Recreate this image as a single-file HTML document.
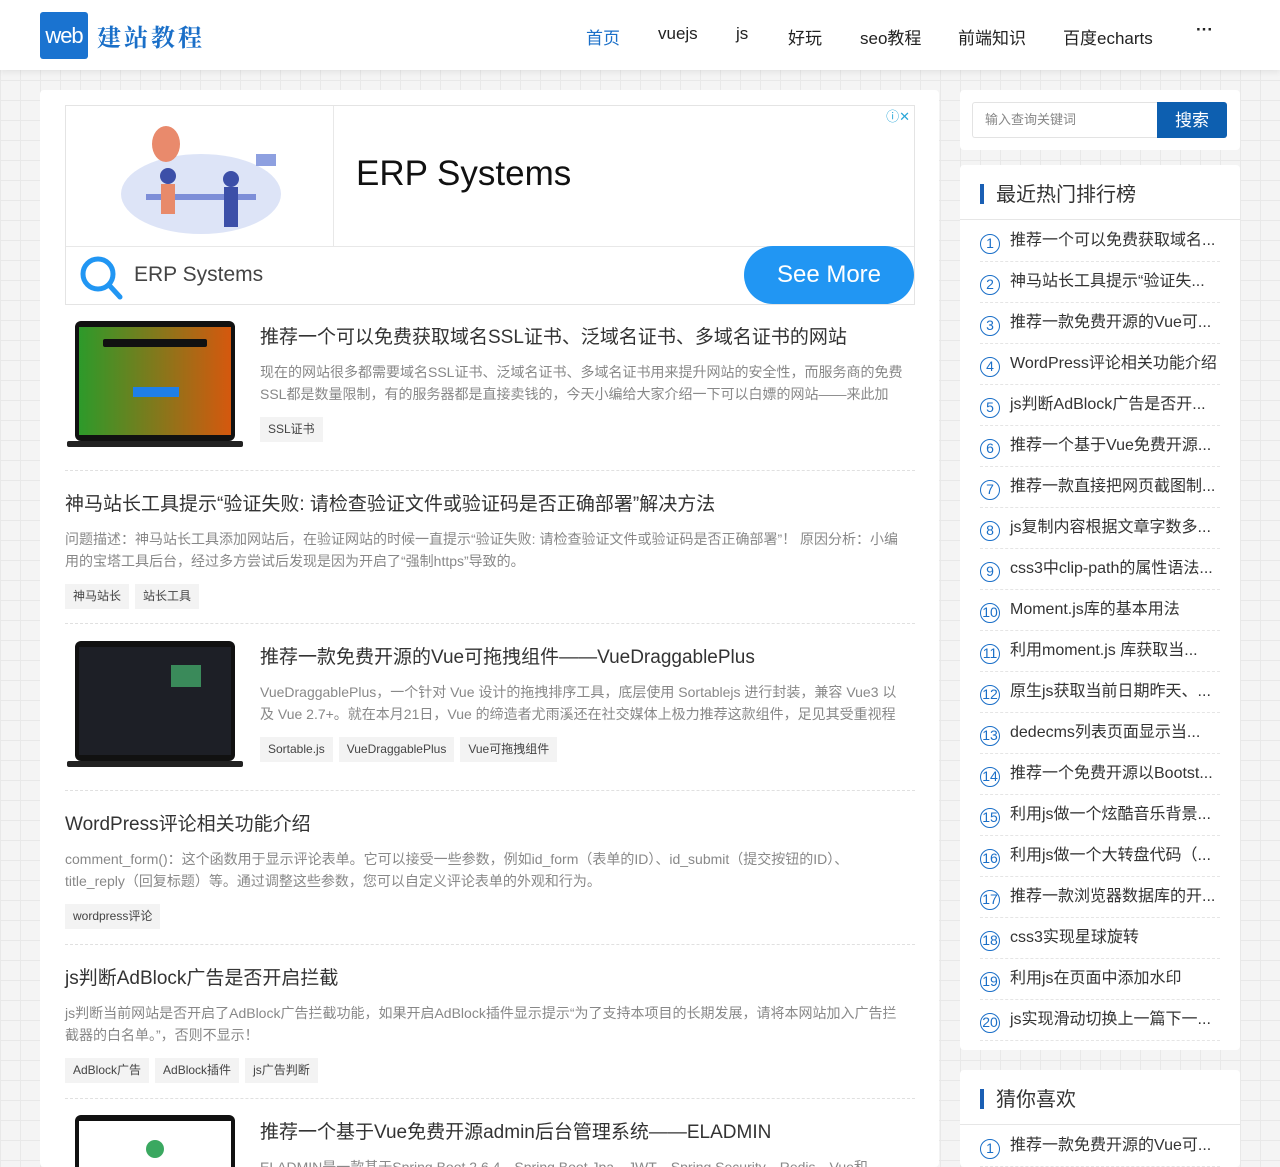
<!DOCTYPE html>
<html style="height:1167px;overflow:hidden"><head><meta charset="utf-8"><style>
*{margin:0;padding:0;box-sizing:border-box}
body{width:1280px;height:1167px;overflow:hidden;font-family:"Liberation Sans","Noto Sans CJK SC",sans-serif;background-color:#f4f4f4;background-image:linear-gradient(#e8e8e8 1px,transparent 1px),linear-gradient(90deg,#e8e8e8 1px,transparent 1px);background-size:20px 20px;position:relative;color:#333}
.hd{position:absolute;left:0;top:0;width:1280px;height:70px;background:#fff;box-shadow:0 2px 6px rgba(0,0,0,.08)}
.logo{position:absolute;left:40px;top:12px;width:48px;height:47px;background:#1a73d0;border-radius:3px;color:#fff;font-size:22px;line-height:47px;text-align:center;letter-spacing:-1px}
.lt{position:absolute;left:97px;top:18px;font-size:24px;color:#1a6fc8;font-weight:bold;letter-spacing:3px;font-family:"Noto Serif CJK SC",serif}
.nav{position:absolute;top:24px;font-size:17px;color:#222}
.main{position:absolute;left:40px;top:90px;width:899px;height:1077px;background:#fff;border-radius:4px;overflow:hidden}
.ad{position:absolute;left:25px;top:15px;width:850px;height:200px;border:1px solid #e4e4e4}
.post{position:absolute;left:25px;width:850px}
.pt{font-size:19px;color:#333;white-space:nowrap}
.pd{font-size:14px;color:#888;line-height:22px;margin-top:12px}
.tags{margin-top:12px}
.tag{display:inline-block;background:#f3f3f3;font-size:12px;color:#444;padding:0 8px;height:25px;line-height:25px;margin-right:6px}
.hr{position:absolute;left:25px;width:850px;border-top:1px dashed #e0e0e0}
.thumb{position:absolute;left:2px;width:176px;height:127px}
.side{position:absolute;left:960px;width:280px;background:#fff;border-radius:4px}
.rl{position:absolute;left:20px;width:240px;height:41px;border-bottom:1px dashed #e5e5e5;font-size:16px;color:#333;white-space:nowrap;overflow:hidden;line-height:40px}
.num{display:inline-block;width:20px;height:20px;border:1.5px solid #1a6fc8;border-radius:50%;color:#1a6fc8;font-size:14px;line-height:17px;text-align:center;margin-right:10px;vertical-align:-3px}
</style></head><body>
<div class="hd">
<div class="logo">web</div><div class="lt">建站教程</div>
<span class="nav" style="left:586px;color:#1a6fc8">首页</span>
<span class="nav" style="left:658px">vuejs</span>
<span class="nav" style="left:736px">js</span>
<span class="nav" style="left:788px">好玩</span>
<span class="nav" style="left:860px">seo教程</span>
<span class="nav" style="left:958px">前端知识</span>
<span class="nav" style="left:1063px">百度echarts</span>
<span class="nav" style="left:1196px;top:20px;font-weight:bold">···</span>
</div>

<div class="main">
<div class="ad">
<div style="position:absolute;left:267px;top:0;width:1px;height:140px;background:#e8e8e8"></div>
<div style="position:absolute;left:0;top:140px;width:848px;height:1px;background:#e8e8e8"></div>
<svg style="position:absolute;left:40px;top:18px" width="190" height="115"><ellipse cx="95" cy="70" rx="80" ry="40" fill="#dde4f7"/><ellipse cx="60" cy="20" rx="14" ry="18" fill="#e98a6c"/><rect x="40" y="70" width="110" height="6" fill="#7d8ed8"/><circle cx="62" cy="52" r="8" fill="#3c4fa8"/><circle cx="125" cy="55" r="8" fill="#3c4fa8"/><rect x="55" y="60" width="14" height="30" fill="#e88a6a"/><rect x="118" y="63" width="14" height="40" fill="#3c4fa8"/><rect x="150" y="30" width="20" height="12" fill="#8ea0e0"/></svg>
<div style="position:absolute;left:290px;top:48px;font-size:35px;color:#111">ERP Systems</div>
<svg style="position:absolute;left:12px;top:148px" width="46" height="46"><circle cx="20" cy="20" r="15" fill="none" stroke="#2196f3" stroke-width="5"/><line x1="31" y1="31" x2="42" y2="43" stroke="#2196f3" stroke-width="5" stroke-linecap="round"/></svg>
<div style="position:absolute;left:68px;top:157px;font-size:21px;color:#444">ERP Systems</div>
<div style="position:absolute;left:678px;top:140px;width:170px;height:58px;background:#2196f3;border-radius:29px;color:#fff;font-size:24px;line-height:58px;text-align:center">See More</div>
<div style="position:absolute;right:4px;top:0;font-size:13px;color:#2aa6d8">ⓘ✕</div>
</div>

<svg class="thumb" style="left:27px;top:231px" viewBox="0 0 176 127"><rect x="8" y="0" width="160" height="120" rx="6" fill="#111"/><defs><linearGradient id="g1" x1="0" x2="1"><stop offset="0" stop-color="#2d9a2a"/><stop offset="1" stop-color="#d5580e"/></linearGradient></defs><rect x="12" y="6" width="152" height="108" fill="url(#g1)"/><rect x="36" y="18" width="104" height="8" rx="2" fill="#111"/><rect x="66" y="66" width="46" height="10" fill="#1f7fe8"/><rect x="0" y="120" width="176" height="6" rx="2" fill="#222"/></svg>
<div class="post" style="top:232px;left:220px;width:650px"><div class="pt">推荐一个可以免费获取域名SSL证书、泛域名证书、多域名证书的网站</div><div class="pd">现在的网站很多都需要域名SSL证书、泛域名证书、多域名证书用来提升网站的安全性，而服务商的免费<br>SSL都是数量限制，有的服务器都是直接卖钱的，今天小编给大家介绍一下可以白嫖的网站——来此加</div><div class="tags"><span class="tag">SSL证书</span></div></div>
<div class="hr" style="top:380px"></div>

<div class="post" style="top:399px"><div class="pt">神马站长工具提示“验证失败: 请检查验证文件或验证码是否正确部署”解决方法</div><div class="pd">问题描述：神马站长工具添加网站后，在验证网站的时候一直提示“验证失败: 请检查验证文件或验证码是否正确部署”！ 原因分析：小编<br>用的宝塔工具后台，经过多方尝试后发现是因为开启了“强制https”导致的。</div><div class="tags"><span class="tag">神马站长</span><span class="tag">站长工具</span></div></div>
<div class="hr" style="top:533px"></div>

<svg class="thumb" style="left:27px;top:551px" viewBox="0 0 176 127"><rect x="8" y="0" width="160" height="120" rx="6" fill="#111"/><rect x="12" y="6" width="152" height="108" fill="#1d1f26"/><rect x="104" y="24" width="30" height="22" fill="#3a8a5a"/><rect x="0" y="120" width="176" height="6" rx="2" fill="#222"/></svg>
<div class="post" style="top:552px;left:220px;width:650px"><div class="pt">推荐一款免费开源的Vue可拖拽组件——VueDraggablePlus</div><div class="pd">VueDraggablePlus，一个针对 Vue 设计的拖拽排序工具，底层使用 Sortablejs 进行封装，兼容 Vue3 以<br>及 Vue 2.7+。就在本月21日，Vue 的缔造者尤雨溪还在社交媒体上极力推荐这款组件，足见其受重视程</div><div class="tags"><span class="tag">Sortable.js</span><span class="tag">VueDraggablePlus</span><span class="tag">Vue可拖拽组件</span></div></div>
<div class="hr" style="top:700px"></div>

<div class="post" style="top:719px"><div class="pt">WordPress评论相关功能介绍</div><div class="pd">comment_form()：这个函数用于显示评论表单。它可以接受一些参数，例如id_form（表单的ID）、id_submit（提交按钮的ID）、<br>title_reply（回复标题）等。通过调整这些参数，您可以自定义评论表单的外观和行为。</div><div class="tags"><span class="tag">wordpress评论</span></div></div>
<div class="hr" style="top:854px"></div>

<div class="post" style="top:873px"><div class="pt">js判断AdBlock广告是否开启拦截</div><div class="pd">js判断当前网站是否开启了AdBlock广告拦截功能，如果开启AdBlock插件显示提示“为了支持本项目的长期发展，请将本网站加入广告拦<br>截器的白名单。”，否则不显示！</div><div class="tags"><span class="tag">AdBlock广告</span><span class="tag">AdBlock插件</span><span class="tag">js广告判断</span></div></div>
<div class="hr" style="top:1008px"></div>

<svg class="thumb" style="left:27px;top:1025px" viewBox="0 0 176 127"><rect x="8" y="0" width="160" height="120" rx="6" fill="#111"/><rect x="12" y="6" width="152" height="108" fill="#fff"/><circle cx="88" cy="34" r="9" fill="#3aa860"/></svg>
<div class="post" style="top:1027px;left:220px;width:650px"><div class="pt">推荐一个基于Vue免费开源admin后台管理系统——ELADMIN</div><div class="pd">ELADMIN是一款基于Spring Boot 2.6.4、Spring Boot Jpa、JWT、Spring Security、Redis、Vue和</div></div>
</div>

<div class="side" style="top:90px;height:60px">
<div style="position:absolute;left:12px;top:12px;width:186px;height:36px;border:1px solid #e3e3e3;border-right:0;border-radius:3px 0 0 3px;font-size:13px;color:#888;line-height:34px;padding-left:12px">输入查询关键词</div>
<div style="position:absolute;left:197px;top:12px;width:70px;height:36px;background:#0d5fb0;border-radius:0 3px 3px 0;color:#fff;font-size:17px;line-height:38px;text-align:center">搜索</div>
</div>

<div class="side" style="top:165px;height:885px">
<div style="position:absolute;left:20px;top:19px;width:4px;height:20px;background:#1a5fb4"></div>
<div style="position:absolute;left:36px;top:13px;font-size:20px;color:#333">最近热门排行榜</div>
<div style="position:absolute;left:0;top:54px;width:280px;height:1px;background:#e6e6e6"></div>
<div class="rl" style="top:56px"><span class="num">1</span>推荐一个可以免费获取域名...</div>
<div class="rl" style="top:97px"><span class="num">2</span>神马站长工具提示“验证失...</div>
<div class="rl" style="top:138px"><span class="num">3</span>推荐一款免费开源的Vue可...</div>
<div class="rl" style="top:179px"><span class="num">4</span>WordPress评论相关功能介绍</div>
<div class="rl" style="top:220px"><span class="num">5</span>js判断AdBlock广告是否开...</div>
<div class="rl" style="top:261px"><span class="num">6</span>推荐一个基于Vue免费开源...</div>
<div class="rl" style="top:302px"><span class="num">7</span>推荐一款直接把网页截图制...</div>
<div class="rl" style="top:343px"><span class="num">8</span>js复制内容根据文章字数多...</div>
<div class="rl" style="top:384px"><span class="num">9</span>css3中clip-path的属性语法...</div>
<div class="rl" style="top:425px"><span class="num">10</span>Moment.js库的基本用法</div>
<div class="rl" style="top:466px"><span class="num">11</span>利用moment.js 库获取当...</div>
<div class="rl" style="top:507px"><span class="num">12</span>原生js获取当前日期昨天、...</div>
<div class="rl" style="top:548px"><span class="num">13</span>dedecms列表页面显示当...</div>
<div class="rl" style="top:589px"><span class="num">14</span>推荐一个免费开源以Bootst...</div>
<div class="rl" style="top:630px"><span class="num">15</span>利用js做一个炫酷音乐背景...</div>
<div class="rl" style="top:671px"><span class="num">16</span>利用js做一个大转盘代码（...</div>
<div class="rl" style="top:712px"><span class="num">17</span>推荐一款浏览器数据库的开...</div>
<div class="rl" style="top:753px"><span class="num">18</span>css3实现星球旋转</div>
<div class="rl" style="top:794px"><span class="num">19</span>利用js在页面中添加水印</div>
<div class="rl" style="top:835px"><span class="num">20</span>js实现滑动切换上一篇下一...</div>
</div>

<div class="side" style="top:1070px;height:97px">
<div style="position:absolute;left:20px;top:19px;width:4px;height:20px;background:#1a5fb4"></div>
<div style="position:absolute;left:36px;top:13px;font-size:20px;color:#333">猜你喜欢</div>
<div style="position:absolute;left:0;top:54px;width:280px;height:1px;background:#e6e6e6"></div>
<div class="rl" style="top:56px"><span class="num">1</span>推荐一款免费开源的Vue可...</div>
</div>
</body></html>
